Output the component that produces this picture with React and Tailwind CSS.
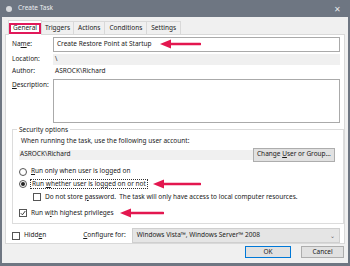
import React from "react";

const F = { fontFamily: '"Noto Sans", "Liberation Sans", sans-serif' };

function Arrow({ className, width }) {
  return (
    <svg className={"absolute " + className} width={width} height="10" viewBox={`0 0 ${width} 10`}>
      <line x1="8" y1="5" x2={width - 1} y2="5" stroke="#e3174f" strokeWidth="2.6" strokeLinecap="round" />
      <polygon points="0,5 11,0.5 11,9.5" fill="#e3174f" />
    </svg>
  );
}

function Radio({ checked }) {
  return (
    <span className="w-[8px] h-[8px] rounded-full border border-[#555] bg-white flex items-center justify-center shrink-0">
      {checked && <span className="w-[4px] h-[4px] rounded-full bg-[#222]" />}
    </span>
  );
}

function Check({ checked }) {
  return (
    <span className="w-[8px] h-[8px] border border-[#555] bg-white flex items-center justify-center shrink-0">
      {checked && (
        <svg width="6" height="6" viewBox="0 0 6 6">
          <path d="M0.8 3.2 L2.4 4.8 L5.3 1" stroke="#222" strokeWidth="0.9" fill="none" />
        </svg>
      )}
    </span>
  );
}

export default function App() {
  return (
    <div className="relative w-[350px] h-[266px] bg-[#6e7682] flex flex-col text-[6.5px] text-[#1a1a1a] leading-none whitespace-nowrap" style={F}>
      {/* title bar */}
      <div className="h-[17px] flex items-center pl-[6px] pr-[9px] shrink-0">
        <span className="w-[6px] h-[6px] rounded-full bg-[#d8dadd] mr-[6px]" />
        <span className="text-[#eceef0] text-[6.5px]">Create Task</span>
        <span className="ml-auto text-[#e6e8ea] text-[8px]">✕</span>
      </div>
      {/* body */}
      <div className="flex-1 mx-[2px] mb-[3px] bg-[#f0f0f0] flex flex-col px-[3px]">
        {/* tabs */}
        <div className="flex items-end h-[17px] pl-[3px] relative z-10">
          <div className="h-[15px] px-[4px] bg-white border border-[#d9d9d9] border-b-0 flex items-center -mb-px relative">
            <span className="absolute left-[0px] top-[2px] right-[0px] bottom-[1px] border-2 border-[#e1195a]" />
            General
          </div>
          <div className="h-[13px] px-[3px] border border-[#d9d9d9] border-b-0 border-l-0 flex items-center">Triggers</div>
          <div className="h-[13px] px-[4px] border border-[#d9d9d9] border-b-0 border-l-0 flex items-center">Actions</div>
          <div className="h-[13px] px-[4px] border border-[#d9d9d9] border-b-0 border-l-0 flex items-center">Conditions</div>
          <div className="h-[13px] px-[4px] border border-[#d9d9d9] border-b-0 border-l-0 flex items-center">Settings</div>
        </div>
        {/* panel */}
        <div className="bg-white border border-[#d9d9d9] flex flex-col pl-[6px] pr-[4px] pt-[2px] h-[210px]">
          <div className="flex items-center h-[15px]">
            <span className="w-[41px]">Na<u>m</u>e:</span>
            <div className="flex-1 h-[15px] border border-[#aaa] flex items-center px-[3px]">Create Restore Point at Startup</div>
          </div>
          <div className="flex items-center h-[11px] mt-[2px]">
            <span className="w-[41px]">Location:</span>
            <div className="flex-1 h-[11px] bg-[#f0f0f0] flex items-center px-[2px]">\</div>
          </div>
          <div className="flex items-center h-[12px] mt-[1px]">
            <span className="w-[41px]">Author:</span>
            <div className="flex-1 flex items-center px-[2px]">ASROCK\Richard</div>
          </div>
          <div className="flex items-start mt-[2px]">
            <span className="w-[41px] pt-[3px]"><u>D</u>escription:</span>
            <div className="flex-1 h-[44px] border border-[#aaa]" />
          </div>
          {/* group */}
          <fieldset className="mt-[4px] border border-[#dcdcdc] px-[8px] pb-[6px] pt-[0px]">
            <legend className="px-[2px] -ml-[4px]">Security options</legend>
            <div className="mt-[5px]">When running the task, use the following user account:</div>
            <div className="flex items-center mt-[3px]">
              <div className="w-[234px] h-[10px] bg-[#f0f0f0] flex items-center px-[1px] -ml-[2px]">ASROCK\Richard</div>
              <div className="ml-auto h-[14px] px-[3px] bg-[#e1e1e1] border border-[#adadad] flex items-center">
                <span>Change&nbsp;</span><u>U</u><span>ser or Group...</span>
              </div>
            </div>
            <div className="flex items-center gap-[4px] mt-[6px] -ml-[2px]">
              <Radio />
              <span><u>R</u>un only when user is logged on</span>
            </div>
            <div className="flex items-center gap-[3px] mt-[3px] -ml-[2px]">
              <Radio checked />
              <span className="border border-[#333] border-dotted px-[1px] py-[1px]">Run <u>w</u>hether user is logged on or not</span>
            </div>
            <div className="flex items-center gap-[4px] mt-[4px] ml-[12px]">
              <Check />
              <span>Do not store <u>p</u>assword.&nbsp; The task will only have access to local computer resources.</span>
            </div>
            <div className="flex items-center gap-[4px] mt-[8px] -ml-[2px]">
              <Check checked />
              <span>Run w<u>i</u>th highest privileges</span>
            </div>
          </fieldset>
          <div className="flex items-center mt-[4px] h-[15px]">
            <Check />
            <span className="ml-[4px]">Hidd<u>e</u>n</span>
            <span className="ml-[37px]"><u>C</u>onfigure for:</span>
            <div className="ml-[6px] flex-1 h-[15px] bg-[#e5e5e5] border border-[#cfcfcf] flex items-center px-[4px]">
              Windows Vista™, Windows Server™ 2008
              <span className="ml-auto text-[#666] text-[6px]">⌄</span>
            </div>
          </div>
        </div>
        {/* buttons */}
        <div className="flex justify-end gap-[10px] mt-[2px] pr-[1px]">
          <div className="w-[46px] h-[12px] bg-[#e1e1e1] border border-[#0078d7] flex items-center justify-center">OK</div>
          <div className="w-[43px] h-[12px] bg-[#e1e1e1] border border-[#adadad] flex items-center justify-center">Cancel</div>
        </div>
      </div>
      <Arrow className="left-[160px] top-[39px]" width={41} />
      <Arrow className="left-[153px] top-[179px]" width={48} />
      <Arrow className="left-[120px] top-[208px]" width={44} />
    </div>
  );
}
